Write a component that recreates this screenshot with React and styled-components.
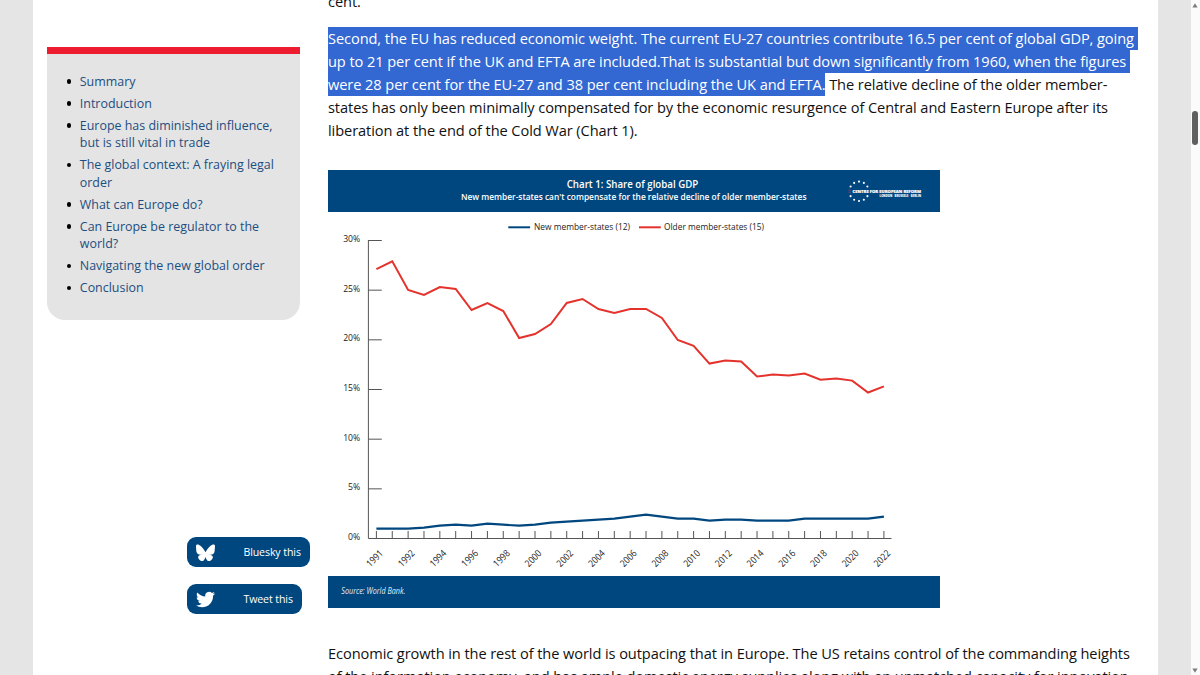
import React from "react";
import styled, { createGlobalStyle } from "styled-components";

const NAVY = "#00477f";
const SANS = '"Open Sans", "Noto Sans", sans-serif';

const Global = createGlobalStyle`
  * { box-sizing: border-box; }
  body { margin: 0; font-family: ${SANS}; overflow: hidden; background: #e5e5e5; }
`;

const Page = styled.div`
  display: flex;
  height: 675px;
  overflow: hidden;
  padding-left: 33px;
`;

const Sheet = styled.main`
  display: flex;
  width: 1125px;
  height: 675px;
  padding-left: 14px;
  background: #fff;
  overflow: hidden;
`;

const Sidebar = styled.aside`
  width: 253px;
  margin-right: 28px;
  padding-top: 47px;
  display: flex;
  flex-direction: column;
  flex-shrink: 0;
`;

const Contents = styled.nav`
  height: 273px;
  padding: 18.9px 0 0 33px;
  border-top: 7px solid #ed1c2e;
  border-radius: 0 0 18px 18px;
  background: #e4e4e4;
`;

const ContentsList = styled.ul`
  margin: 0;
  padding: 0;
  list-style: none;
  display: flex;
  flex-direction: column;
  gap: 4.65px;
`;

const ContentsItem = styled.li`
  display: flex;
  font-size: 12.45px;
  line-height: 17.4px;
  color: #1d4e80;
  white-space: pre;

  &::before {
    content: "";
    width: 4.6px;
    height: 4.6px;
    margin: 6.4px 8.5px 0 -13.3px;
    border-radius: 50%;
    background: #000;
  }
`;

const ShareList = styled.div`
  display: flex;
  flex-direction: column;
  align-items: flex-start;
  gap: 17px;
  margin: 217.4px 0 0 140.4px;
`;

const ShareButton = styled.a`
  display: flex;
  align-items: center;
  width: ${(p) => p.$width}px;
  height: 30px;
  padding-left: 8.5px;
  border-radius: 9px;
  background: ${NAVY};
  color: #fff;
  font-size: 10.6px;
  letter-spacing: -0.1px;
  white-space: nowrap;

  svg { width: 19px; height: 19px; margin-right: 28.5px; fill: #fff; }
`;

const Article = styled.article`
  display: flex;
  flex-direction: column;
  margin-top: -10px;
  width: 820px;
  flex-shrink: 0;
`;

const Paragraph = styled.p`
  margin: 0 0 14px;
  font-size: 14.6px;
  letter-spacing: -0.08px;
  line-height: 23px;
  color: #111;
  white-space: nowrap;
`;

const Line = styled.span`
  display: block;
  height: 23px;
`;

const Selected = styled.mark`
  display: inline-block;
  height: 23px;
  padding-right: ${(p) => p.$tail || 0}px;
  background: #3367d1;
  color: #fff;
`;

const Figure = styled.figure`
  width: 612px;
  height: 438px;
  margin: 14px 0 34px;
  display: flex;
  flex-direction: column;
  flex-shrink: 0;
`;

const ChartHeader = styled.header`
  height: 42px;
  background: ${NAVY};
`;

const ChartFooter = styled.footer`
  height: 32.5px;
  background: ${NAVY};
`;

const Drawing = styled.svg`
  display: block;
  font-family: ${SANS};
`;

const Scrollbar = styled.div`
  width: 9.5px;
  margin-left: auto;
  display: flex;
  flex-direction: column;
  align-items: center;
  justify-content: space-between;
  padding: 3px 0 2px;
  background: #fbfbfb;
`;

const Thumb = styled.div`
  width: 6px;
  height: 33.5px;
  margin: 103px 0 auto;
  border-radius: 3px;
  background: #606060;
`;

const CONTENTS = [
  "Summary",
  "Introduction",
  "Europe has diminished influence,\nbut is still vital in trade",
  "The global context: A fraying legal\norder",
  "What can Europe do?",
  "Can Europe be regulator to the\nworld?",
  "Navigating the new global order",
  "Conclusion",
];

const OLDER = [
  269.2, 261.3, 290, 295, 287, 289, 310, 303, 311, 338, 334, 324, 303, 299, 309, 313, 309,
  309, 318, 340, 345.8, 363.6, 360.6, 361.6, 376.5, 374.6, 375.4, 373.6, 379.7, 378.6, 380.6,
  392.5, 386.4,
];
const NEWER = [
  566, 566, 566, 563, 557, 554, 557, 551, 554, 557, 554, 548, 545, 542, 539, 536, 530, 524,
  530, 536, 536, 542, 539, 539, 542, 542, 542, 536, 536, 536, 536, 536, 530,
].map((v) => 340 + v / 3);

const YEARS = [1991, 1992, 1994, 1996, 1998, 2000, 2002, 2004, 2006, 2008, 2010, 2012, 2014, 2016, 2018, 2020, 2022];
const LEVELS = [30, 25, 20, 15, 10, 5, 0];

const px = (i) => 376.4 + i * 15.86;
const points = (ys) => ys.map((y, i) => `${px(i)},${y}`).join(" ");

function Logo() {
  const stars = Array.from({ length: 12 }, (_, i) => i).filter((i) => i !== 3 && i !== 9);
  return (
    <g fill="#fff">
      {stars.map((i) => {
        const a = (i * Math.PI) / 6;
        return <circle key={i} cx={859 + 9.7 * Math.sin(a)} cy={191.3 - 9.7 * Math.cos(a)} r="1.05" />;
      })}
      <path d="M848.6 190.2h2M848.6 192.2h2" stroke="#b8355a" strokeWidth=".9" />
      <text x="852.6" y="192.6" fontSize="3.9" fontWeight="800" textLength="68.4" lengthAdjust="spacingAndGlyphs" stroke="#fff" strokeWidth=".15">
        CENTRE FOR EUROPEAN REFORM
      </text>
      <text x="879.5" y="196.6" fontSize="2.8" fontWeight="800" textLength="41.5" lengthAdjust="spacingAndGlyphs">
        LONDON <tspan fill="#e0325a">·</tspan> BRUSSELS <tspan fill="#e0325a">·</tspan> BERLIN
      </text>
    </g>
  );
}

function Chart() {
  return (
    <Figure>
      <ChartHeader>
        <Drawing width="612" height="42" viewBox="328 170 612 42">
          <g fill="#fff" fontWeight="600">
            <text x="566.7" y="188.4" fontSize="10.2" textLength="131.6" lengthAdjust="spacingAndGlyphs">Chart 1: Share of global GDP</text>
            <text x="461" y="200" fontSize="9" textLength="345.5" lengthAdjust="spacingAndGlyphs">
              New member-states can't compensate for the relative decline of older member-states
            </text>
          </g>
          <Logo />
        </Drawing>
      </ChartHeader>
      <Drawing width="612" height="363.5" viewBox="328 212 612 363.5">
        <path d="M508.3 227.3h21.8" stroke={NAVY} strokeWidth="2" />
        <path d="M639 227.3h21.8" stroke="#e4322c" strokeWidth="2" />
        <g fill="#222" fontSize="9.2">
          <text x="534" y="230.2" textLength="96" lengthAdjust="spacingAndGlyphs">New member-states (12)</text>
          <text x="664" y="230.2" textLength="100" lengthAdjust="spacingAndGlyphs">Older member-states (15)</text>
          {LEVELS.map((v, i) => (
            <text key={v} x={v < 10 ? 348 : 343.2} y={242 + i * 49.67} textLength={v < 10 ? 12.2 : 17} lengthAdjust="spacingAndGlyphs">
              {v}%
            </text>
          ))}
          {YEARS.map((y, i) => (
            <text key={y} transform={`translate(${px(i * 2) - 6.2} 567.4) rotate(-45)`} fontSize="9.6" textLength="19" lengthAdjust="spacingAndGlyphs">
              {y}
            </text>
          ))}
        </g>
        <g stroke="#555" strokeWidth="1" fill="none">
          <path d="M368.4 240V538.5H891.5" />
          {LEVELS.slice(0, 6).map((v, i) => (
            <path key={v} d={`M368.4 ${240.5 + i * 49.67}h13.4`} />
          ))}
          {OLDER.map((_, i) => (
            <path key={i} d={`M${px(i)} 531v7.5`} />
          ))}
        </g>
        <polyline points={points(NEWER)} fill="none" stroke={NAVY} strokeWidth="2.1" />
        <polyline points={points(OLDER)} fill="none" stroke="#e4322c" strokeWidth="2" />
      </Drawing>
      <ChartFooter>
        <Drawing width="612" height="32" viewBox="328 576 612 32">
          <text x="341.3" y="594.4" fill="#e4edf5" fontSize="8.4" fontStyle="italic" textLength="64" lengthAdjust="spacingAndGlyphs">
            Source: World Bank.
          </text>
        </Drawing>
      </ChartFooter>
    </Figure>
  );
}

export default function App() {
  return (
    <Page>
      <Global />
      <Sheet>
        <Sidebar>
          <Contents>
            <ContentsList>
              {CONTENTS.map((t) => (
                <ContentsItem key={t}>{t}</ContentsItem>
              ))}
            </ContentsList>
          </Contents>
          <ShareList>
            <ShareButton $width={122.5}>
              <svg viewBox="0 0 24 24">
                <path d="M5.2 3.2C7.950 5.260 10.900 9.450 12 11.700c1.100-2.250 4.050-6.440 6.800-8.500 1.980-1.490 5.200-2.640 5.200 1.020 0 .73-.42 6.150-.67 7.030-.86 3.060-3.980 3.840-6.760 3.360 4.850.83 6.090 3.560 3.420 6.300-5.060 5.200-7.280-1.300-7.840-2.970-.1-.3-.15-.45-.15-.33 0-.12-.05.03-.15.33-.56 1.670-2.780 8.170-7.840 2.970-2.670-2.740-1.430-5.470 3.420-6.300-2.780.48-5.900-.3-6.760-3.360C.420 10.370 0 4.950 0 4.220 0 .560 3.220 1.710 5.200 3.200Z" />
              </svg>
              Bluesky this
            </ShareButton>
            <ShareButton $width={115}>
              <svg viewBox="0 0 24 24">
                <path d="M23.950 4.570a10 10 0 0 1-2.820.77 4.960 4.960 0 0 0 2.160-2.720c-.95.550-2 .95-3.130 1.180a4.920 4.920 0 0 0-8.380 4.480C7.690 8.100 4.070 6.130 1.640 3.160a4.820 4.820 0 0 0-.67 2.480c0 1.710.87 3.210 2.190 4.090a4.900 4.900 0 0 1-2.230-.61v.06a4.920 4.920 0 0 0 3.950 4.830 5 5 0 0 1-2.210.08 4.940 4.940 0 0 0 4.600 3.420A9.870 9.870 0 0 1 0 19.540a14 14 0 0 0 7.550 2.210c9.050 0 14-7.500 14-13.980 0-.21 0-.42-.02-.63a9.940 9.940 0 0 0 2.460-2.550z" />
              </svg>
              Tweet this
            </ShareButton>
          </ShareList>
        </Sidebar>
        <Article>
          <Paragraph><Line>cent.</Line></Paragraph>
          <Paragraph>
            <Line><Selected $tail={4}>Second, the EU has reduced economic weight. The current EU-27 countries contribute 16.5 per cent of global GDP, going</Selected></Line>
            <Line><Selected $tail={4}>up to 21 per cent if the UK and EFTA are included.That is substantial but down significantly from 1960, when the figures</Selected></Line>
            <Line><Selected>were 28 per cent for the EU-27 and 38 per cent including the UK and EFTA.</Selected> The relative decline of the older member-</Line>
            <Line>states has only been minimally compensated for by the economic resurgence of Central and Eastern Europe after its</Line>
            <Line>liberation at the end of the Cold War (Chart 1).</Line>
          </Paragraph>
          <Chart />
          <Paragraph>
            <Line>Economic growth in the rest of the world is outpacing that in Europe. The US retains control of the commanding heights</Line>
            <Line>of the information economy, and has ample domestic energy supplies along with an unmatched capacity for innovation,</Line>
          </Paragraph>
        </Article>
      </Sheet>
      <Scrollbar>
        <svg width="6" height="5" viewBox="0 0 6 5"><path d="M3 .3L5.600 4.400H.4Z" fill="#7c7c7c" /></svg>
        <Thumb />
        <svg width="6" height="5" viewBox="0 0 6 5"><path d="M3 4.700L5.600.600H.4Z" fill="#7c7c7c" /></svg>
      </Scrollbar>
    </Page>
  );
}
